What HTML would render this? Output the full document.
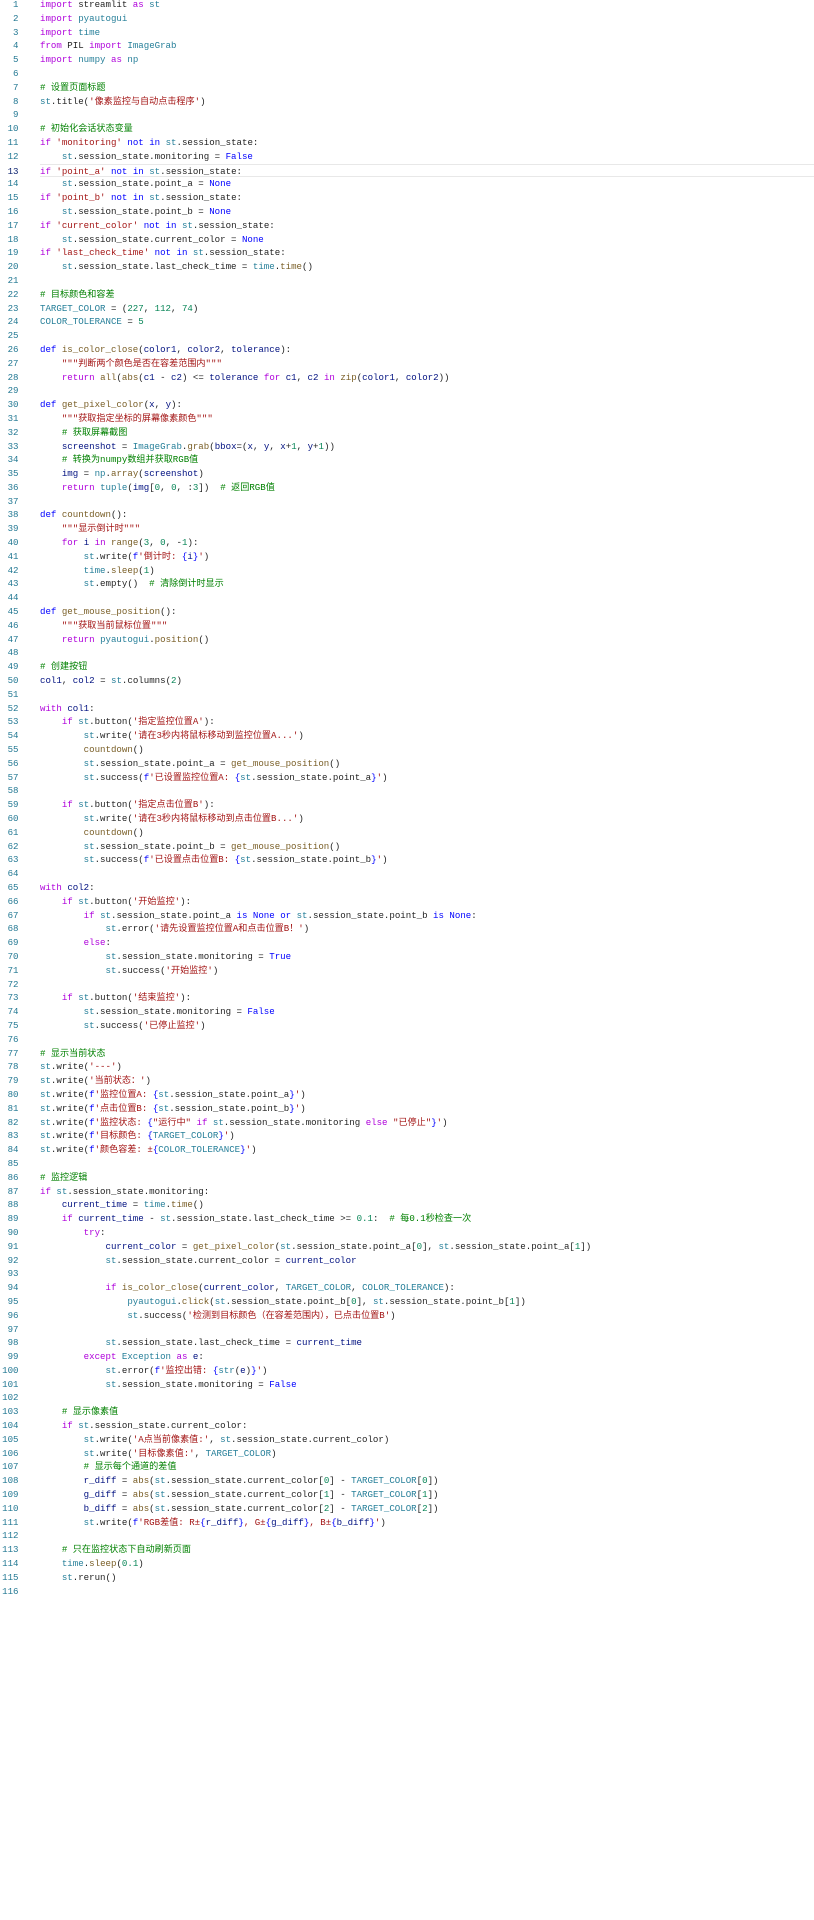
<!DOCTYPE html>
<html><head><meta charset="utf-8"><style>
body{margin:0;background:#fff;width:814px;height:1920px;overflow:hidden}
#w{position:absolute;top:-2px;left:0;width:814px}
.l{height:13.806px;line-height:13.806px;white-space:pre;font-family:"Liberation Mono","Noto Sans CJK SC",monospace;font-size:9.1px;color:#1f1f1f;position:relative}
.n{position:absolute;left:0;width:18.5px;text-align:right;color:#237893}
.t{position:absolute;left:40px}
.hl{border-top:1px solid #e8e8e8;border-bottom:1px solid #e8e8e8;box-sizing:border-box;margin-left:40px}
.hl .n{left:-40px;color:#0b216f}.hl .t{left:0}
.k{color:#af00db}.c{color:#267f99}.s{color:#a31515}.m{color:#008000}.f{color:#795e26}.v{color:#001080}.b{color:#0000ff}.d{color:#098658}
</style></head><body><div id="w">
<div class="l"><span class="n">1</span><span class="t"><span class="k">import</span> streamlit <span class="k">as</span> <span class="c">st</span></span></div>
<div class="l"><span class="n">2</span><span class="t"><span class="k">import</span> <span class="c">pyautogui</span></span></div>
<div class="l"><span class="n">3</span><span class="t"><span class="k">import</span> <span class="c">time</span></span></div>
<div class="l"><span class="n">4</span><span class="t"><span class="k">from</span> PIL <span class="k">import</span> <span class="c">ImageGrab</span></span></div>
<div class="l"><span class="n">5</span><span class="t"><span class="k">import</span> <span class="c">numpy</span> <span class="k">as</span> <span class="c">np</span></span></div>
<div class="l"><span class="n">6</span><span class="t"></span></div>
<div class="l"><span class="n">7</span><span class="t"><span class="m"># 设置页面标题</span></span></div>
<div class="l"><span class="n">8</span><span class="t"><span class="c">st</span>.title(<span class="s">'像素监控与自动点击程序'</span>)</span></div>
<div class="l"><span class="n">9</span><span class="t"></span></div>
<div class="l"><span class="n">10</span><span class="t"><span class="m"># 初始化会话状态变量</span></span></div>
<div class="l"><span class="n">11</span><span class="t"><span class="k">if</span> <span class="s">'monitoring'</span> <span class="b">not</span> <span class="b">in</span> <span class="c">st</span>.session_state:</span></div>
<div class="l"><span class="n">12</span><span class="t">    <span class="c">st</span>.session_state.monitoring = <span class="b">False</span></span></div>
<div class="l hl"><span class="n">13</span><span class="t"><span class="k">if</span> <span class="s">'point_a'</span> <span class="b">not</span> <span class="b">in</span> <span class="c">st</span>.session_state:</span></div>
<div class="l"><span class="n">14</span><span class="t">    <span class="c">st</span>.session_state.point_a = <span class="b">None</span></span></div>
<div class="l"><span class="n">15</span><span class="t"><span class="k">if</span> <span class="s">'point_b'</span> <span class="b">not</span> <span class="b">in</span> <span class="c">st</span>.session_state:</span></div>
<div class="l"><span class="n">16</span><span class="t">    <span class="c">st</span>.session_state.point_b = <span class="b">None</span></span></div>
<div class="l"><span class="n">17</span><span class="t"><span class="k">if</span> <span class="s">'current_color'</span> <span class="b">not</span> <span class="b">in</span> <span class="c">st</span>.session_state:</span></div>
<div class="l"><span class="n">18</span><span class="t">    <span class="c">st</span>.session_state.current_color = <span class="b">None</span></span></div>
<div class="l"><span class="n">19</span><span class="t"><span class="k">if</span> <span class="s">'last_check_time'</span> <span class="b">not</span> <span class="b">in</span> <span class="c">st</span>.session_state:</span></div>
<div class="l"><span class="n">20</span><span class="t">    <span class="c">st</span>.session_state.last_check_time = <span class="c">time</span>.<span class="f">time</span>()</span></div>
<div class="l"><span class="n">21</span><span class="t"></span></div>
<div class="l"><span class="n">22</span><span class="t"><span class="m"># 目标颜色和容差</span></span></div>
<div class="l"><span class="n">23</span><span class="t"><span class="c">TARGET_COLOR</span> = (<span class="d">227</span>, <span class="d">112</span>, <span class="d">74</span>)</span></div>
<div class="l"><span class="n">24</span><span class="t"><span class="c">COLOR_TOLERANCE</span> = <span class="d">5</span></span></div>
<div class="l"><span class="n">25</span><span class="t"></span></div>
<div class="l"><span class="n">26</span><span class="t"><span class="b">def</span> <span class="f">is_color_close</span>(<span class="v">color1</span>, <span class="v">color2</span>, <span class="v">tolerance</span>):</span></div>
<div class="l"><span class="n">27</span><span class="t">    <span class="s">"""判断两个颜色是否在容差范围内"""</span></span></div>
<div class="l"><span class="n">28</span><span class="t">    <span class="k">return</span> <span class="f">all</span>(<span class="f">abs</span>(<span class="v">c1</span> - <span class="v">c2</span>) &lt;= <span class="v">tolerance</span> <span class="k">for</span> <span class="v">c1</span>, <span class="v">c2</span> <span class="k">in</span> <span class="f">zip</span>(<span class="v">color1</span>, <span class="v">color2</span>))</span></div>
<div class="l"><span class="n">29</span><span class="t"></span></div>
<div class="l"><span class="n">30</span><span class="t"><span class="b">def</span> <span class="f">get_pixel_color</span>(<span class="v">x</span>, <span class="v">y</span>):</span></div>
<div class="l"><span class="n">31</span><span class="t">    <span class="s">"""获取指定坐标的屏幕像素颜色"""</span></span></div>
<div class="l"><span class="n">32</span><span class="t">    <span class="m"># 获取屏幕截图</span></span></div>
<div class="l"><span class="n">33</span><span class="t">    <span class="v">screenshot</span> = <span class="c">ImageGrab</span>.<span class="f">grab</span>(<span class="v">bbox</span>=(<span class="v">x</span>, <span class="v">y</span>, <span class="v">x</span>+<span class="d">1</span>, <span class="v">y</span>+<span class="d">1</span>))</span></div>
<div class="l"><span class="n">34</span><span class="t">    <span class="m"># 转换为numpy数组并获取RGB值</span></span></div>
<div class="l"><span class="n">35</span><span class="t">    <span class="v">img</span> = <span class="c">np</span>.<span class="f">array</span>(<span class="v">screenshot</span>)</span></div>
<div class="l"><span class="n">36</span><span class="t">    <span class="k">return</span> <span class="c">tuple</span>(<span class="v">img</span>[<span class="d">0</span>, <span class="d">0</span>, :<span class="d">3</span>])  <span class="m"># 返回RGB值</span></span></div>
<div class="l"><span class="n">37</span><span class="t"></span></div>
<div class="l"><span class="n">38</span><span class="t"><span class="b">def</span> <span class="f">countdown</span>():</span></div>
<div class="l"><span class="n">39</span><span class="t">    <span class="s">"""显示倒计时"""</span></span></div>
<div class="l"><span class="n">40</span><span class="t">    <span class="k">for</span> <span class="v">i</span> <span class="k">in</span> <span class="f">range</span>(<span class="d">3</span>, <span class="d">0</span>, -<span class="d">1</span>):</span></div>
<div class="l"><span class="n">41</span><span class="t">        <span class="c">st</span>.write(<span class="b">f</span><span class="s">'倒计时: </span><span class="b">{</span><span class="v">i</span><span class="b">}</span><span class="s">'</span>)</span></div>
<div class="l"><span class="n">42</span><span class="t">        <span class="c">time</span>.<span class="f">sleep</span>(<span class="d">1</span>)</span></div>
<div class="l"><span class="n">43</span><span class="t">        <span class="c">st</span>.empty()  <span class="m"># 清除倒计时显示</span></span></div>
<div class="l"><span class="n">44</span><span class="t"></span></div>
<div class="l"><span class="n">45</span><span class="t"><span class="b">def</span> <span class="f">get_mouse_position</span>():</span></div>
<div class="l"><span class="n">46</span><span class="t">    <span class="s">"""获取当前鼠标位置"""</span></span></div>
<div class="l"><span class="n">47</span><span class="t">    <span class="k">return</span> <span class="c">pyautogui</span>.<span class="f">position</span>()</span></div>
<div class="l"><span class="n">48</span><span class="t"></span></div>
<div class="l"><span class="n">49</span><span class="t"><span class="m"># 创建按钮</span></span></div>
<div class="l"><span class="n">50</span><span class="t"><span class="v">col1</span>, <span class="v">col2</span> = <span class="c">st</span>.columns(<span class="d">2</span>)</span></div>
<div class="l"><span class="n">51</span><span class="t"></span></div>
<div class="l"><span class="n">52</span><span class="t"><span class="k">with</span> <span class="v">col1</span>:</span></div>
<div class="l"><span class="n">53</span><span class="t">    <span class="k">if</span> <span class="c">st</span>.button(<span class="s">'指定监控位置A'</span>):</span></div>
<div class="l"><span class="n">54</span><span class="t">        <span class="c">st</span>.write(<span class="s">'请在3秒内将鼠标移动到监控位置A...'</span>)</span></div>
<div class="l"><span class="n">55</span><span class="t">        <span class="f">countdown</span>()</span></div>
<div class="l"><span class="n">56</span><span class="t">        <span class="c">st</span>.session_state.point_a = <span class="f">get_mouse_position</span>()</span></div>
<div class="l"><span class="n">57</span><span class="t">        <span class="c">st</span>.success(<span class="b">f</span><span class="s">'已设置监控位置A: </span><span class="b">{</span><span class="c">st</span>.session_state.point_a<span class="b">}</span><span class="s">'</span>)</span></div>
<div class="l"><span class="n">58</span><span class="t"></span></div>
<div class="l"><span class="n">59</span><span class="t">    <span class="k">if</span> <span class="c">st</span>.button(<span class="s">'指定点击位置B'</span>):</span></div>
<div class="l"><span class="n">60</span><span class="t">        <span class="c">st</span>.write(<span class="s">'请在3秒内将鼠标移动到点击位置B...'</span>)</span></div>
<div class="l"><span class="n">61</span><span class="t">        <span class="f">countdown</span>()</span></div>
<div class="l"><span class="n">62</span><span class="t">        <span class="c">st</span>.session_state.point_b = <span class="f">get_mouse_position</span>()</span></div>
<div class="l"><span class="n">63</span><span class="t">        <span class="c">st</span>.success(<span class="b">f</span><span class="s">'已设置点击位置B: </span><span class="b">{</span><span class="c">st</span>.session_state.point_b<span class="b">}</span><span class="s">'</span>)</span></div>
<div class="l"><span class="n">64</span><span class="t"></span></div>
<div class="l"><span class="n">65</span><span class="t"><span class="k">with</span> <span class="v">col2</span>:</span></div>
<div class="l"><span class="n">66</span><span class="t">    <span class="k">if</span> <span class="c">st</span>.button(<span class="s">'开始监控'</span>):</span></div>
<div class="l"><span class="n">67</span><span class="t">        <span class="k">if</span> <span class="c">st</span>.session_state.point_a <span class="b">is</span> <span class="b">None</span> <span class="b">or</span> <span class="c">st</span>.session_state.point_b <span class="b">is</span> <span class="b">None</span>:</span></div>
<div class="l"><span class="n">68</span><span class="t">            <span class="c">st</span>.error(<span class="s">'请先设置监控位置A和点击位置B！'</span>)</span></div>
<div class="l"><span class="n">69</span><span class="t">        <span class="k">else</span>:</span></div>
<div class="l"><span class="n">70</span><span class="t">            <span class="c">st</span>.session_state.monitoring = <span class="b">True</span></span></div>
<div class="l"><span class="n">71</span><span class="t">            <span class="c">st</span>.success(<span class="s">'开始监控'</span>)</span></div>
<div class="l"><span class="n">72</span><span class="t"></span></div>
<div class="l"><span class="n">73</span><span class="t">    <span class="k">if</span> <span class="c">st</span>.button(<span class="s">'结束监控'</span>):</span></div>
<div class="l"><span class="n">74</span><span class="t">        <span class="c">st</span>.session_state.monitoring = <span class="b">False</span></span></div>
<div class="l"><span class="n">75</span><span class="t">        <span class="c">st</span>.success(<span class="s">'已停止监控'</span>)</span></div>
<div class="l"><span class="n">76</span><span class="t"></span></div>
<div class="l"><span class="n">77</span><span class="t"><span class="m"># 显示当前状态</span></span></div>
<div class="l"><span class="n">78</span><span class="t"><span class="c">st</span>.write(<span class="s">'---'</span>)</span></div>
<div class="l"><span class="n">79</span><span class="t"><span class="c">st</span>.write(<span class="s">'当前状态：'</span>)</span></div>
<div class="l"><span class="n">80</span><span class="t"><span class="c">st</span>.write(<span class="b">f</span><span class="s">'监控位置A: </span><span class="b">{</span><span class="c">st</span>.session_state.point_a<span class="b">}</span><span class="s">'</span>)</span></div>
<div class="l"><span class="n">81</span><span class="t"><span class="c">st</span>.write(<span class="b">f</span><span class="s">'点击位置B: </span><span class="b">{</span><span class="c">st</span>.session_state.point_b<span class="b">}</span><span class="s">'</span>)</span></div>
<div class="l"><span class="n">82</span><span class="t"><span class="c">st</span>.write(<span class="b">f</span><span class="s">'监控状态: </span><span class="b">{</span><span class="s">"运行中"</span> <span class="k">if</span> <span class="c">st</span>.session_state.monitoring <span class="k">else</span> <span class="s">"已停止"</span><span class="b">}</span><span class="s">'</span>)</span></div>
<div class="l"><span class="n">83</span><span class="t"><span class="c">st</span>.write(<span class="b">f</span><span class="s">'目标颜色: </span><span class="b">{</span><span class="c">TARGET_COLOR</span><span class="b">}</span><span class="s">'</span>)</span></div>
<div class="l"><span class="n">84</span><span class="t"><span class="c">st</span>.write(<span class="b">f</span><span class="s">'颜色容差: ±</span><span class="b">{</span><span class="c">COLOR_TOLERANCE</span><span class="b">}</span><span class="s">'</span>)</span></div>
<div class="l"><span class="n">85</span><span class="t"></span></div>
<div class="l"><span class="n">86</span><span class="t"><span class="m"># 监控逻辑</span></span></div>
<div class="l"><span class="n">87</span><span class="t"><span class="k">if</span> <span class="c">st</span>.session_state.monitoring:</span></div>
<div class="l"><span class="n">88</span><span class="t">    <span class="v">current_time</span> = <span class="c">time</span>.<span class="f">time</span>()</span></div>
<div class="l"><span class="n">89</span><span class="t">    <span class="k">if</span> <span class="v">current_time</span> - <span class="c">st</span>.session_state.last_check_time &gt;= <span class="d">0.1</span>:  <span class="m"># 每0.1秒检查一次</span></span></div>
<div class="l"><span class="n">90</span><span class="t">        <span class="k">try</span>:</span></div>
<div class="l"><span class="n">91</span><span class="t">            <span class="v">current_color</span> = <span class="f">get_pixel_color</span>(<span class="c">st</span>.session_state.point_a[<span class="d">0</span>], <span class="c">st</span>.session_state.point_a[<span class="d">1</span>])</span></div>
<div class="l"><span class="n">92</span><span class="t">            <span class="c">st</span>.session_state.current_color = <span class="v">current_color</span></span></div>
<div class="l"><span class="n">93</span><span class="t"></span></div>
<div class="l"><span class="n">94</span><span class="t">            <span class="k">if</span> <span class="f">is_color_close</span>(<span class="v">current_color</span>, <span class="c">TARGET_COLOR</span>, <span class="c">COLOR_TOLERANCE</span>):</span></div>
<div class="l"><span class="n">95</span><span class="t">                <span class="c">pyautogui</span>.<span class="f">click</span>(<span class="c">st</span>.session_state.point_b[<span class="d">0</span>], <span class="c">st</span>.session_state.point_b[<span class="d">1</span>])</span></div>
<div class="l"><span class="n">96</span><span class="t">                <span class="c">st</span>.success(<span class="s">'检测到目标颜色（在容差范围内），已点击位置B'</span>)</span></div>
<div class="l"><span class="n">97</span><span class="t"></span></div>
<div class="l"><span class="n">98</span><span class="t">            <span class="c">st</span>.session_state.last_check_time = <span class="v">current_time</span></span></div>
<div class="l"><span class="n">99</span><span class="t">        <span class="k">except</span> <span class="c">Exception</span> <span class="k">as</span> <span class="v">e</span>:</span></div>
<div class="l"><span class="n">100</span><span class="t">            <span class="c">st</span>.error(<span class="b">f</span><span class="s">'监控出错: </span><span class="b">{</span><span class="c">str</span>(<span class="v">e</span>)<span class="b">}</span><span class="s">'</span>)</span></div>
<div class="l"><span class="n">101</span><span class="t">            <span class="c">st</span>.session_state.monitoring = <span class="b">False</span></span></div>
<div class="l"><span class="n">102</span><span class="t"></span></div>
<div class="l"><span class="n">103</span><span class="t">    <span class="m"># 显示像素值</span></span></div>
<div class="l"><span class="n">104</span><span class="t">    <span class="k">if</span> <span class="c">st</span>.session_state.current_color:</span></div>
<div class="l"><span class="n">105</span><span class="t">        <span class="c">st</span>.write(<span class="s">'A点当前像素值:'</span>, <span class="c">st</span>.session_state.current_color)</span></div>
<div class="l"><span class="n">106</span><span class="t">        <span class="c">st</span>.write(<span class="s">'目标像素值:'</span>, <span class="c">TARGET_COLOR</span>)</span></div>
<div class="l"><span class="n">107</span><span class="t">        <span class="m"># 显示每个通道的差值</span></span></div>
<div class="l"><span class="n">108</span><span class="t">        <span class="v">r_diff</span> = <span class="f">abs</span>(<span class="c">st</span>.session_state.current_color[<span class="d">0</span>] - <span class="c">TARGET_COLOR</span>[<span class="d">0</span>])</span></div>
<div class="l"><span class="n">109</span><span class="t">        <span class="v">g_diff</span> = <span class="f">abs</span>(<span class="c">st</span>.session_state.current_color[<span class="d">1</span>] - <span class="c">TARGET_COLOR</span>[<span class="d">1</span>])</span></div>
<div class="l"><span class="n">110</span><span class="t">        <span class="v">b_diff</span> = <span class="f">abs</span>(<span class="c">st</span>.session_state.current_color[<span class="d">2</span>] - <span class="c">TARGET_COLOR</span>[<span class="d">2</span>])</span></div>
<div class="l"><span class="n">111</span><span class="t">        <span class="c">st</span>.write(<span class="b">f</span><span class="s">'RGB差值: R±</span><span class="b">{</span><span class="v">r_diff</span><span class="b">}</span><span class="s">, G±</span><span class="b">{</span><span class="v">g_diff</span><span class="b">}</span><span class="s">, B±</span><span class="b">{</span><span class="v">b_diff</span><span class="b">}</span><span class="s">'</span>)</span></div>
<div class="l"><span class="n">112</span><span class="t"></span></div>
<div class="l"><span class="n">113</span><span class="t">    <span class="m"># 只在监控状态下自动刷新页面</span></span></div>
<div class="l"><span class="n">114</span><span class="t">    <span class="c">time</span>.<span class="f">sleep</span>(<span class="d">0.1</span>)</span></div>
<div class="l"><span class="n">115</span><span class="t">    <span class="c">st</span>.rerun()</span></div>
<div class="l"><span class="n">116</span><span class="t"></span></div>
</div></body></html>
